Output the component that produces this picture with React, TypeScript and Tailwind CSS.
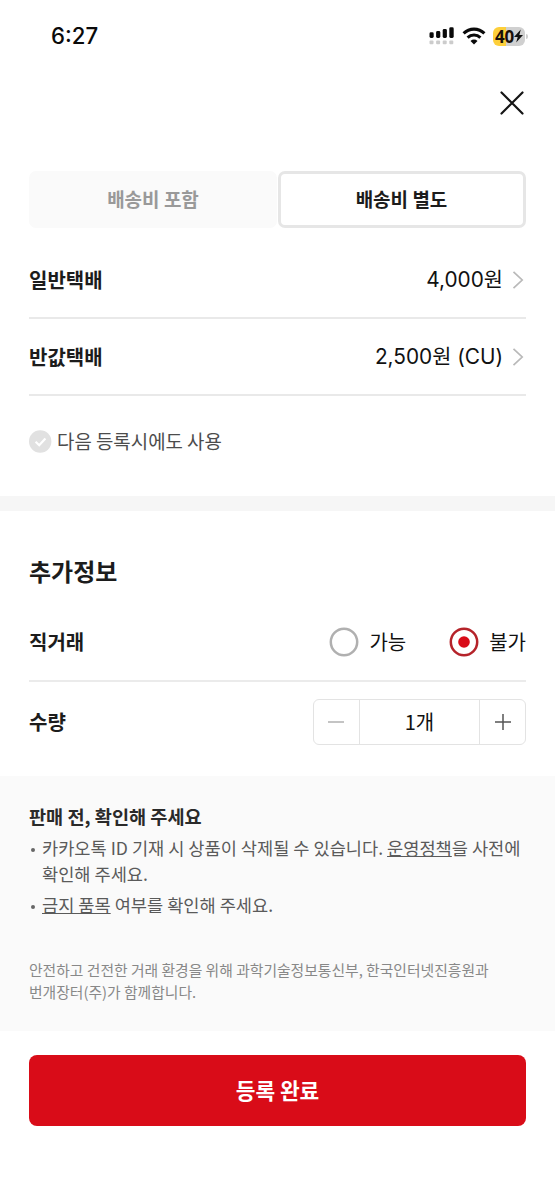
import React, { useState } from "react";

const KR = "font-['Noto_Sans_CJK_KR',sans-serif]";
const NUM = "font-['Inter','Noto_Sans_CJK_KR',sans-serif]";

function SignalIcon() {
  return (
    <svg width="26" height="18" viewBox="0 0 26 18">
      <g fill="#0a0a0a">
        <rect x="0.5" y="5.3" width="4.2" height="5.7" rx="1.4" />
        <rect x="7.1" y="4" width="4.2" height="7" rx="1.4" />
        <rect x="13.7" y="2" width="4.2" height="9" rx="1.4" />
        <rect x="20.3" y="0.3" width="4.4" height="10.7" rx="1.4" />
      </g>
      <g fill="#cccccc">
        <rect x="0.5" y="13.6" width="4" height="3.6" rx="1" />
        <rect x="7.1" y="13.6" width="4" height="3.6" rx="1" />
        <rect x="13.7" y="13.6" width="4" height="3.6" rx="1" />
        <rect x="20.3" y="13.6" width="4" height="3.6" rx="1" />
      </g>
    </svg>
  );
}

function WifiIcon() {
  return (
    <svg width="24" height="18" viewBox="0 0 24 18" fill="none" stroke="#0a0a0a">
      <path d="M1.6 6.4C7.4 0.7 16.6 0.7 22.4 6.4" strokeWidth="3.1" />
      <path d="M5.6 10.6C9.2 7.1 14.8 7.1 18.4 10.6" strokeWidth="3" />
      <path d="M12 17.4L8.5 13.9C10.5 12.1 13.5 12.1 15.5 13.9Z" fill="#0a0a0a" stroke="none" />
    </svg>
  );
}

function Battery() {
  return (
    <div className="flex items-center">
      <div className="flex h-[19px] w-[32px] items-center justify-center rounded-[6px] bg-[linear-gradient(90deg,#fdcf3a_41%,#d0d0d0_41%)]">
        <span className="font-['Open_Sans',sans-serif] text-[17px] leading-none font-bold tracking-[-0.3px] text-[#1a0f08]">40</span>
        <svg width="9" height="14" viewBox="0 0 9 14" fill="#111">
          <path d="M6.8 0.4L0 8H3.7L2.2 13.6L9 5.9H5.3Z" />
        </svg>
      </div>
      <span className="ml-px h-[5px] w-[2px] rounded-r-full bg-[#cfcfcf]" />
    </div>
  );
}

function FeeRow({ label, value }: { label: string; value: string }) {
  return (
    <button className="flex h-[77px] w-full items-center justify-between border-b-2 border-[#e9e9e9] text-[20px] text-[#1c1c1c]">
      <span className={`${KR} font-bold`}>{label}</span>
      <span className="flex items-center">
        <span className={`${NUM} pt-px text-[20.8px] text-[#111111]`}>{value}</span>
        <svg className="ml-[9px]" width="14" height="20" viewBox="0 0 14 20" fill="none" stroke="#b9b9b9" strokeWidth="1.7">
          <path d="M1.5 1.8L10.2 10L1.5 18.2" />
        </svg>
      </span>
    </button>
  );
}

function Radio({ label, checked, onSelect }: { label: string; checked: boolean; onSelect: () => void }) {
  return (
    <button className="flex items-center gap-[10.5px]" onClick={onSelect}>
      <svg width="30" height="30" viewBox="0 0 30 30" fill="none">
        <circle cx="15" cy="15" r="13.2" stroke={checked ? "#b5232a" : "#b0b0b0"} strokeWidth="2.5" />
        {checked && <circle cx="15" cy="15" r="5.8" fill="#d90c18" />}
      </svg>
      <span className={`${KR} text-[20px] font-normal text-[#111111]`}>{label}</span>
    </button>
  );
}

export default function App() {
  const [fee, setFee] = useState("separate");
  const [direct, setDirect] = useState("no");
  const [count, setCount] = useState(1);
  const on = "border-[3px] border-[#e6e6e6] bg-white text-[#1c1c1c]";
  const off = "border-[3px] border-[#fafafa] bg-[#fafafa] text-[#999999]";

  return (
    <div className={`${KR} flex h-[1200px] w-[555px] flex-col overflow-hidden bg-white`}>
      <header className="flex h-[72px] shrink-0 items-center justify-between pr-[27px] pl-[51px]">
        <span className={`${NUM} text-[22.2px] leading-none font-medium text-[#0a0a0a]`}>6:27</span>
        <div className="flex items-center">
          <SignalIcon />
          <div className="ml-[7px] flex">
            <WifiIcon />
          </div>
          <div className="ml-[7px]">
            <Battery />
          </div>
        </div>
      </header>

      <div className="flex h-[99px] shrink-0 justify-end pt-[19px] pr-[31px]">
        <button className="h-6 w-6" aria-label="닫기">
          <svg width="24" height="24" viewBox="0 0 24 24" stroke="#151515" strokeWidth="2.2" strokeLinecap="round">
            <path d="M1.5 1.5L22.5 22.5M22.5 1.5L1.5 22.5" />
          </svg>
        </button>
      </div>

      <section className="shrink-0 px-[29px]">
        <div className="grid h-[57px] grid-cols-2 gap-[1px] text-[19px] font-bold">
          <button className={`rounded-[7px] ${fee === "included" ? on : off}`} onClick={() => setFee("included")}>
            배송비 포함
          </button>
          <button className={`rounded-[7px] pr-px ${fee === "separate" ? on : off}`} onClick={() => setFee("separate")}>
            배송비 별도
          </button>
        </div>
        <div className="pt-[14px]">
          <FeeRow label="일반택배" value="4,000원" />
          <FeeRow label="반값택배" value="2,500원 (CU)" />
        </div>
        <div className="flex h-[100px] items-center pb-[9px] text-[18.9px] text-[#4c4c4c]">
          <svg width="23" height="23" viewBox="0 0 23 23" fill="none">
            <circle cx="11.2" cy="11.5" r="11.2" fill="#e1e1e1" />
            <path d="M6.6 11.8L10.2 15.2L16.4 8.4" stroke="#fff" strokeWidth="2.2" />
          </svg>
          <span className="ml-[5px]">다음 등록시에도 사용</span>
        </div>
      </section>

      <div className="h-[15px] shrink-0 bg-[#f6f6f6]" />

      <section className="h-[265px] shrink-0 px-[29px] pt-[42px] text-[#1c1c1c]">
        <h2 className="text-[24px] leading-[36px] font-bold">추가정보</h2>
        <div className="mt-[15px] flex h-[78px] items-center justify-between border-b-2 border-[#ebebeb]">
          <span className="text-[20px] font-bold">직거래</span>
          <div className="flex gap-[42.5px]">
            <Radio label="가능" checked={direct === "yes"} onSelect={() => setDirect("yes")} />
            <Radio label="불가" checked={direct === "no"} onSelect={() => setDirect("no")} />
          </div>
        </div>
        <div className="flex h-[80px] items-center justify-between">
          <span className="text-[20px] font-bold">수량</span>
          <div className="flex h-[46px] w-[213px] rounded-[6px] border-[1.5px] border-[#e3e3e3]">
            <button className="flex w-[45px] items-center justify-center" onClick={() => setCount(Math.max(1, count - 1))} aria-label="빼기">
              <svg className="mr-[2px]" width="16" height="16" viewBox="0 0 16 16" stroke="#b0b0b0" strokeWidth="1.5">
                <path d="M0 8H16" />
              </svg>
            </button>
            <div className={`${KR} flex flex-1 items-center justify-center border-x-[1.5px] border-[#e3e3e3] text-[20px] text-[#111111]`}>
              {count}개
            </div>
            <button className="flex w-[45px] items-center justify-center" onClick={() => setCount(count + 1)} aria-label="더하기">
              <svg width="16" height="16" viewBox="0 0 16 16" stroke="#555" strokeWidth="1.5">
                <path d="M0 8H16M8 0V16" />
              </svg>
            </button>
          </div>
        </div>
      </section>

      <section className="h-[255px] shrink-0 bg-[#fafafa] px-[29px] pt-[27px] text-[#5a5a5a]">
        <h3 className="text-[18.6px] leading-[26px] font-bold text-[#2a2a2a]">판매 전, 확인해 주세요</h3>
        <ul className="mt-[6px] text-[17.6px] leading-[26px]">
          <li className="flex">
            <span className="mt-[13px] mr-[7px] ml-[2px] h-[4px] w-[4px] shrink-0 rounded-full bg-[#666666]" />
            <p className="whitespace-nowrap">
              카카오톡 ID 기재 시 상품이 삭제될 수 있습니다. <a className="underline">운영정책</a>을 사전에
              <br />
              확인해 주세요.
            </p>
          </li>
          <li className="mt-[5px] flex">
            <span className="mt-[13px] mr-[7px] ml-[2px] h-[4px] w-[4px] shrink-0 rounded-full bg-[#666666]" />
            <p>
              <a className="underline">금지 품목</a> 여부를 확인해 주세요.
            </p>
          </li>
        </ul>
        <p className="mt-[41px] text-[14.8px] leading-[22px] whitespace-nowrap text-[#888888]">
          안전하고 건전한 거래 환경을 위해 과학기술정보통신부, 한국인터넷진흥원과
          <br />
          번개장터(주)가 함께합니다.
        </p>
      </section>

      <footer className="px-[29px] pt-[24px]">
        <button className="h-[71px] w-full rounded-[8px] bg-[#d90c18] pb-px text-[21.4px] font-bold text-white">등록 완료</button>
      </footer>
    </div>
  );
}
